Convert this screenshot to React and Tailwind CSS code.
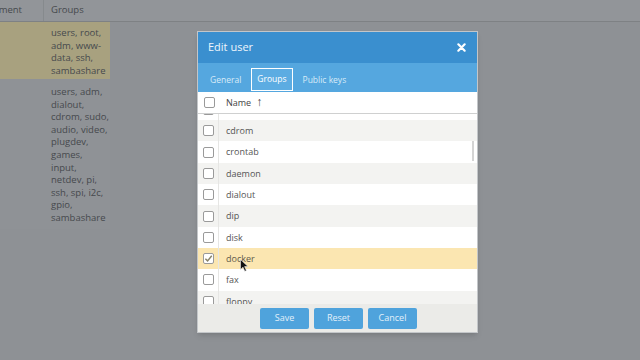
import React from "react";

const groups = ["bluetooth", "cdrom", "crontab", "daemon", "dialout", "dip", "disk", "docker", "fax", "floppy"];

function Checkbox({ checked }) {
  return (
    <span className="flex items-center justify-center w-[11px] h-[11px] border border-[#9a9a9a] rounded-[2px] bg-white">
      {checked && (
        <svg width="9" height="9" viewBox="0 0 10 10">
          <path d="M1.5 5.2 L4 7.6 L8.6 2" fill="none" stroke="#8a8468" strokeWidth="1.6" />
        </svg>
      )}
    </span>
  );
}

function Cursor() {
  return (
    <svg className="absolute left-[240px] top-[259px]" width="9" height="13" viewBox="0 0 9 13">
      <path d="M0.5 0.5 L0.5 10.5 L3 8.2 L4.8 12.3 L6.4 11.6 L4.6 7.6 L8 7.6 Z" fill="#111" stroke="#eee" strokeWidth="0.6" />
    </svg>
  );
}

function PageBehind() {
  return (
    <div className="text-[9.5px] leading-[12.6px] text-[#46494d] whitespace-nowrap">
      <div className="flex h-[22px] bg-[#929599] border-b border-[#7e8184]">
        <div className="w-[44px] border-r border-[#868a8d] flex items-center justify-end pr-[21px]">
          <span>Comment</span>
        </div>
        <div className="w-[66px] flex items-center pl-[7px]">Groups</div>
      </div>
      <div className="flex">
        <div className="w-[44px] h-[57px] bg-[#a8a17f]"></div>
        <div className="w-[66px] h-[57px] bg-[#a8a17f] pl-[7px] pt-[5px]">
          users, root,<br />adm, www-<br />data, ssh,<br />sambashare
        </div>
      </div>
      <div className="flex">
        <div className="w-[44px] h-[150px] bg-[#8f9296]"></div>
        <div className="w-[66px] h-[150px] bg-[#8f9296] pl-[7px] pt-[7px]">
          users, adm,<br />dialout,<br />cdrom, sudo,<br />audio, video,<br />plugdev,<br />games,<br />input,<br />netdev, pi,<br />ssh, spi, i2c,<br />gpio,<br />sambashare
        </div>
      </div>
    </div>
  );
}

function EditUserDialog() {
  return (
    <div className="absolute left-[197px] top-[31px] w-[281px] h-[302px] border border-[#c3c6c9] bg-white flex flex-col shadow-md">
      <div className="h-[31px] bg-[#3a8fcf] flex items-center justify-between pl-[10px] pr-[11px]">
        <span className="text-[11px] text-[#eef6fc]">Edit user</span>
        <svg width="9" height="9" viewBox="0 0 10 10">
          <path d="M1.5 1.5 L8.5 8.5 M8.5 1.5 L1.5 8.5" stroke="#fff" strokeWidth="2.4" strokeLinecap="round" />
        </svg>
      </div>
      <div className="h-[29px] bg-[#55a7df] flex items-end pl-[6px] text-[8.5px] text-[#d8ebf8]">
        <div className="h-[23px] pl-[6px] pr-[10px] flex items-center">General</div>
        <div className="h-[23px] px-[5px] flex items-center border border-white bg-[#5cace2] text-white mb-[1px]">Groups</div>
        <div className="h-[23px] pl-[10px] flex items-center">Public keys</div>
      </div>
      <div className="h-[22px] flex items-center border-b border-[#cfd0d0] text-[9px] text-[#444]">
        <div className="w-[21px] flex justify-center pl-[1px]"><Checkbox /></div>
        <span className="ml-[7px]">Name</span>
        <span className="ml-[5px] text-[12px] leading-none -mt-[2px]">↑</span>
      </div>
      <div className="relative h-[190px] overflow-hidden">
        <div className="-mt-[15.3px]">
          {groups.map((g, i) => (
            <div
              key={g}
              className={
                "h-[21.33px] flex items-center text-[9px] " +
                (g === "docker" ? "bg-[#fbe6b1] text-[#5e5a4a]" : i % 2 === 1 ? "bg-[#f3f3f1] text-[#555]" : "bg-white text-[#555]")
              }
            >
              <div className="w-[21px] h-full flex items-center justify-center pl-[1px] border-r border-[#e6e6e4]">
                <Checkbox checked={g === "docker"} />
              </div>
              <span className="ml-[7px]">{g}</span>
            </div>
          ))}
        </div>
        <div className="absolute right-[3px] top-[27px] w-[2px] h-[20px] bg-[#d4d4d4]"></div>
      </div>
      <div className="flex-1 bg-[#ebebe8] flex items-center justify-center gap-[5px] pl-[2px] text-[9px] text-[#e3f0fa]">
        <button className="w-[49px] h-[21px] rounded-[2px] bg-[#4fa3dc]">Save</button>
        <button className="w-[49px] h-[21px] rounded-[2px] bg-[#4fa3dc]">Reset</button>
        <button className="w-[49px] h-[21px] rounded-[2px] bg-[#4fa3dc]">Cancel</button>
      </div>
    </div>
  );
}

export default function App() {
  return (
    <div className="relative w-[640px] h-[360px] overflow-hidden bg-[#8e9195] font-['Open_Sans',sans-serif]">
      <PageBehind />
      <EditUserDialog />
      <Cursor />
    </div>
  );
}
